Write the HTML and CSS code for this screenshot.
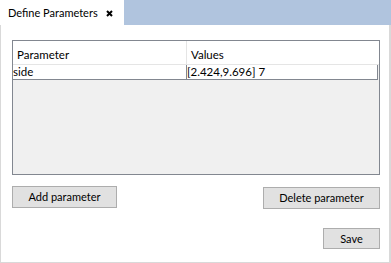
FILE: index.html
```html
<!DOCTYPE html>
<html>
<head>
<meta charset="utf-8">
<link rel="stylesheet" href="styles.css">
</head>
<body>
<div class="tabbar">
  <div class="tab">
    <span class="tab-title">Define Parameters</span>
    <svg class="tab-close" width="7" height="7" viewBox="0 0 7 7"><path d="M1 1L6 6M6 1L1 6" stroke="#000" stroke-width="2"/></svg>
  </div>
  <div class="tab-fill"></div>
</div>
<div class="panel">
  <div class="grid">
    <div class="grid-head">
      <div class="cell col1">Parameter</div>
      <div class="cell col2">Values</div>
    </div>
    <div class="grid-row">
      <div class="cell col1">side</div>
      <div class="cell col2">[2.424,9.696] 7</div>
    </div>
    <div class="grid-empty"></div>
  </div>
  <div class="btn-row">
    <button class="btn btn-add">Add parameter</button>
    <button class="btn btn-del">Delete parameter</button>
  </div>
  <div class="save-row">
    <button class="btn btn-save">Save</button>
  </div>
</div>
</body>
</html>
```
FILE: styles.css
```css
html, body {
  margin: 0;
  padding: 0;
  background: #ffffff;
  font-family: Lato, "Noto Sans", sans-serif;
  font-size: 11.5px;
  color: #000;
}
.tabbar {
  display: flex;
  height: 25px;
}
.tab {
  width: 124px;
  background: #ffffff;
  display: flex;
  align-items: center;
  box-sizing: border-box;
  padding-left: 8px;
  white-space: nowrap;
}
.tab-title {
  color: #000;
  line-height: 16px;
  font-size: 11px;
  width: 89px;
}
.tab-close {
  margin-left: 9px;
  margin-top: 1px;
}
.tab-fill {
  flex: 1;
  background: #b0c4de;
}
.panel {
  box-sizing: border-box;
  width: 391px;
  height: 238px;
  border-left: 1px solid #d9d9d9;
  border-right: 2px solid #d9d9d9;
  border-bottom: 1px solid #d9d9d9;
  padding: 15px 9px 0 11px;
}
.grid {
  box-sizing: border-box;
  width: 368px;
  height: 135px;
  border: 1px solid #828790;
  background: #f0f0f0;
  display: flex;
  flex-direction: column;
  white-space: nowrap;
}
.grid-head {
  display: flex;
  height: 23px;
  background: #fff;
  border-bottom: 1px solid #e5e5e5;
}
.grid-head .cell {
  padding-left: 4px;
  padding-top: 6px;
  line-height: 15px;
}
.grid-head .col1 {
  border-right: 1px solid #e5e5e5;
}
.grid-row {
  display: flex;
  height: 14px;
  background: #fff;
  border-bottom: 1px solid #828790;
  margin-right: 1px;
  border-right: 1px solid #828790;
}
.grid-row .cell {
  line-height: 14px;
}
.grid-row .col1 {
  border-right: 1px solid #828790;
}
.col1 {
  width: 174px;
  box-sizing: border-box;
}
.col2 {
  flex: 1;
}
.grid-empty {
  flex: 1;
}
.btn-row {
  display: flex;
  justify-content: space-between;
  margin-top: 11px;
}
.btn {
  box-sizing: border-box;
  height: 22px;
  border: 1px solid #adadad;
  background: #e1e1e1;
  font-family: Lato, "Noto Sans", sans-serif;
  font-size: 11px;
  color: #000;
  padding: 0;
  line-height: 18px;
}
.btn-add {
  width: 105px;
}
.btn-del {
  width: 117px;
  margin-top: 1px;
}
.save-row {
  display: flex;
  justify-content: flex-end;
  margin-top: 19px;
}
.btn-save {
  width: 57px;
  height: 21px;
}
```
